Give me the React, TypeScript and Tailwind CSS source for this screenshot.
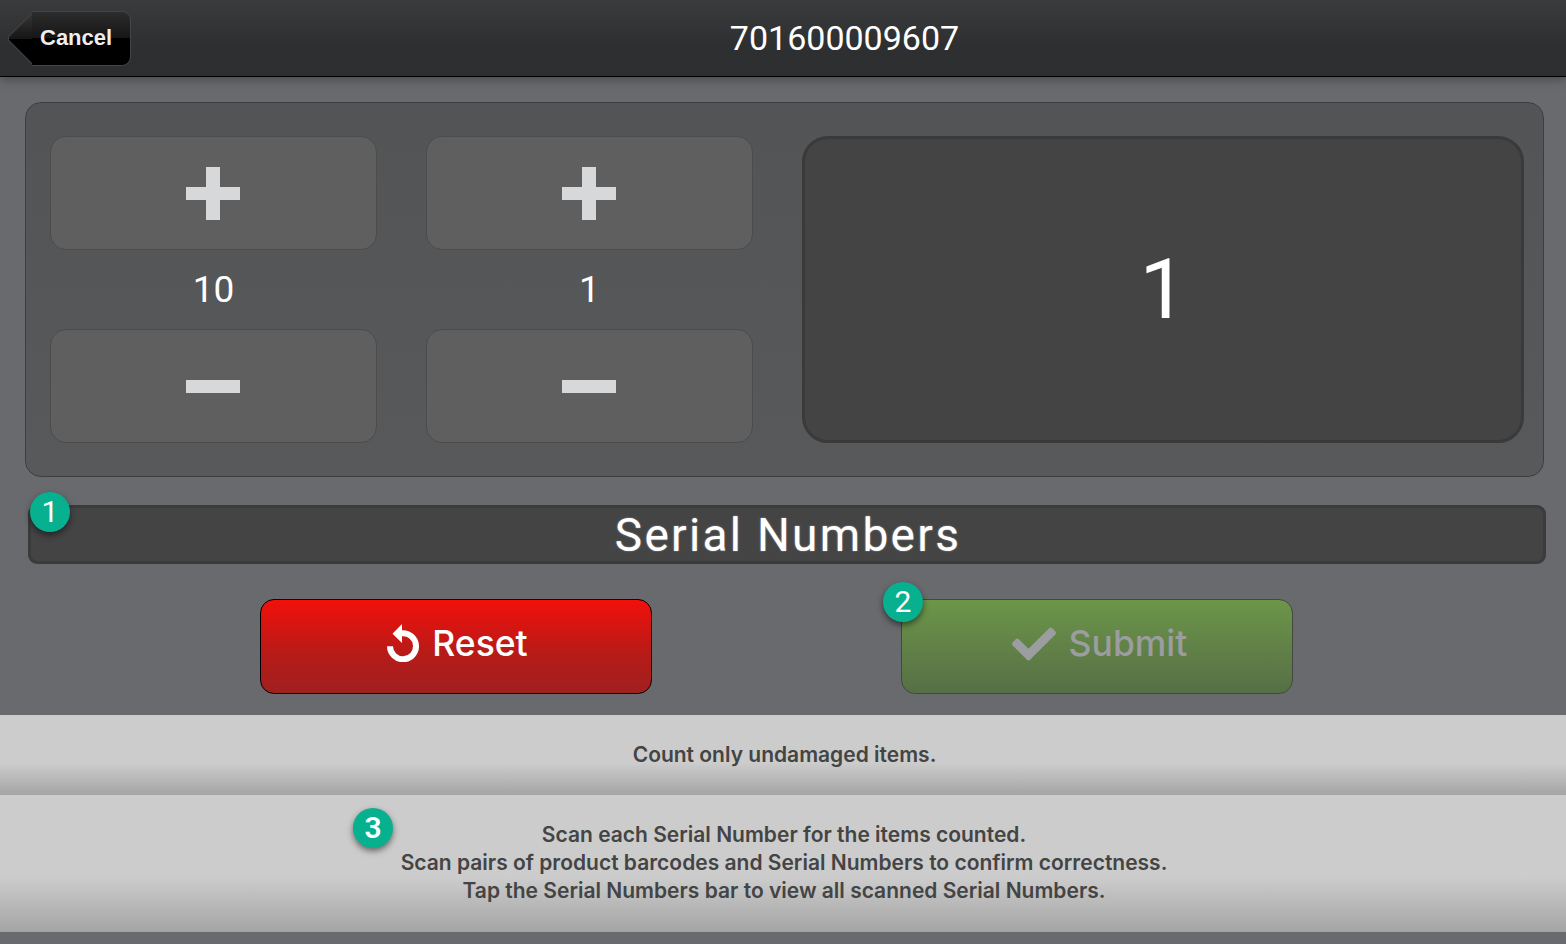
import { FaCheck } from "react-icons/fa";

const Plus = () => (
  <svg width="54" height="54" viewBox="0 0 54 54" className="mr-[1px] mt-[1px] text-[#d7d8da]" fill="currentColor" aria-hidden="true">
    <path d="M20 0h14v20h20v13H34v20H20V33H0V20h20z" />
  </svg>
);

const Minus = () => (
  <svg width="54" height="14" viewBox="0 0 54 14" className="mr-[1px] mt-[1px] text-[#d7d8da]" fill="currentColor" aria-hidden="true">
    <rect width="54" height="13" />
  </svg>
);

const StepButton = ({ children }: { children: React.ReactNode }) => (
  <button className="flex h-[114px] w-[327px] items-center justify-center rounded-[16px] border border-[#4c4c4c] bg-[#5f5f5f]">
    {children}
  </button>
);

const Stepper = ({ value }: { value: string }) => (
  <div className="flex w-[327px] flex-col items-center">
    <StepButton>
      <Plus />
    </StepButton>
    <div className="flex h-[79px] items-center justify-center pb-[1px] font-['Roboto',sans-serif] text-[37px] leading-none text-white">
      {value}
    </div>
    <StepButton>
      <Minus />
    </StepButton>
  </div>
);

const Badge = ({ n, className }: { n: string; className: string }) => (
  <div
    className={`absolute flex h-10 w-10 items-center justify-center rounded-full bg-[#07b08f] font-['Roboto',sans-serif] text-[30px] leading-none text-white shadow-[0_3px_6px_rgba(0,0,0,0.5)] ${className}`}
  >
    {n}
  </div>
);

export default function App() {
  return (
    <div className="flex h-[944px] w-[1566px] flex-col overflow-hidden bg-[#696a6e] font-['Inter',sans-serif]">
      <header className="relative flex h-[77px] shrink-0 items-center border-b border-black bg-[linear-gradient(to_bottom,#3a3b3c_0%,#2e2f31_60%,#2d2e30_100%)] px-[8px] shadow-[0_2px_10px_rgba(0,0,0,0.35)]">
        <button className="relative flex h-[55px] w-[123px] shrink-0 items-center">
          <span className="absolute left-[6px] top-[8px] h-[39px] w-[39px] rotate-45 rounded-bl-[5px] border-b border-l border-[#454545] bg-[linear-gradient(to_bottom_right,#383838_0%,#161616_50%,#000000_50%,#000000_100%)]" />
          <span className="absolute inset-y-0 left-[24px] right-0 rounded-r-[9px] border border-l-0 border-[#454545] bg-[linear-gradient(to_bottom,#2c2c2c_0%,#161616_50%,#000000_50%,#000000_100%)]" />
          <span className="relative ml-[32px] font-['Liberation_Sans',sans-serif] text-[22px] font-bold leading-none text-[#eeeeee] [text-shadow:0_1px_1px_#000]">
            Cancel
          </span>
        </button>
        <h1 className="flex-1 text-center font-['Roboto',sans-serif] text-[34px] font-normal leading-none text-white">
          701600009607
        </h1>
      </header>

      <main className="flex flex-1 flex-col">
        <section className="ml-[25px] mt-[25px] flex h-[375px] w-[1519px] items-start gap-[49px] rounded-[16px] border border-[#3d3e40] bg-gradient-to-b from-[#535456] to-[#58595b] pl-[24px] pr-[19px] pt-[33px]">
          <div className="flex gap-[49px]">
            <Stepper value="10" />
            <Stepper value="1" />
          </div>
          <div className="flex h-[307px] w-[722px] items-center justify-center rounded-[26px] border-[3px] border-[#3a3a3a] bg-[#444444] font-['Roboto',sans-serif] text-[84px] leading-none text-white">
            1
          </div>
        </section>

        <div className="relative ml-[28px] mt-[28px] flex h-[59px] w-[1518px] items-center justify-center rounded-[9px] border-[3px] border-[#3b3b3b] bg-[#444444]">
          <span className="pl-[2px] font-['Roboto',sans-serif] text-[46px] leading-none tracking-[2.3px] text-white [text-shadow:0_0_2px_rgba(255,255,255,0.45)]">
            Serial Numbers
          </span>
          <Badge n="1" className="left-[-1px] top-[-16px]" />
        </div>

        <div className="mt-[35px] flex pl-[260px]">
          <button className="flex h-[95px] w-[392px] items-center justify-center gap-[13px] rounded-[14px] border border-black bg-[linear-gradient(to_bottom,#f2100b_0%,#b51b18_60%,#a02020_100%)] pb-[5px] pl-[3px] text-[35.5px] font-medium text-white">
            <svg width="32" height="38" viewBox="0 0 32 38" fill="none" aria-hidden="true" className="mb-[3px]">
              <path d="M15 0 5.500 9.700l9.500 9.300z" fill="currentColor" />
              <path d="M3 22.300A13 13 0 1 0 14.700 9.300" stroke="currentColor" strokeWidth="6" />
            </svg>
            <span>Reset</span>
          </button>
          <div className="relative ml-[249px]">
            <button className="flex h-[95px] w-[392px] items-center justify-center gap-[13px] rounded-[14px] border border-[#44483f] bg-[linear-gradient(to_bottom,#6c9649_0%,#5f7e47_60%,#566f45_100%)] pb-[5px] pl-[5px] text-[35.5px] font-medium text-[#9c9da0]">
              <FaCheck className="h-[44px] w-[44px]" />
              <span>Submit</span>
            </button>
            <Badge n="2" className="left-[-18px] top-[-17px]" />
          </div>
        </div>

        <div className="mt-[21px] flex h-[80px] items-center justify-center bg-[linear-gradient(to_bottom,#cccccc_0%,#cccccc_60%,#a4a4a4_100%)] pl-[3px] text-[21px] font-[560] leading-[28px] text-[#444444]">
          Count only undamaged items.
        </div>

        <div className="relative flex h-[137px] flex-col items-center bg-[linear-gradient(to_bottom,#cccccc_0%,#cccccc_60%,#a4a4a4_100%)] pl-[2px] pt-[26px] text-[21px] font-[560] leading-[28px] text-[#444444]">
          <p>Scan each Serial Number for the items counted.</p>
          <p>Scan pairs of product barcodes and Serial Numbers to confirm correctness.</p>
          <p>Tap the Serial Numbers bar to view all scanned Serial Numbers.</p>
          <Badge n="3" className="left-[353px] top-[13px]" />
        </div>
      </main>
    </div>
  );
}
